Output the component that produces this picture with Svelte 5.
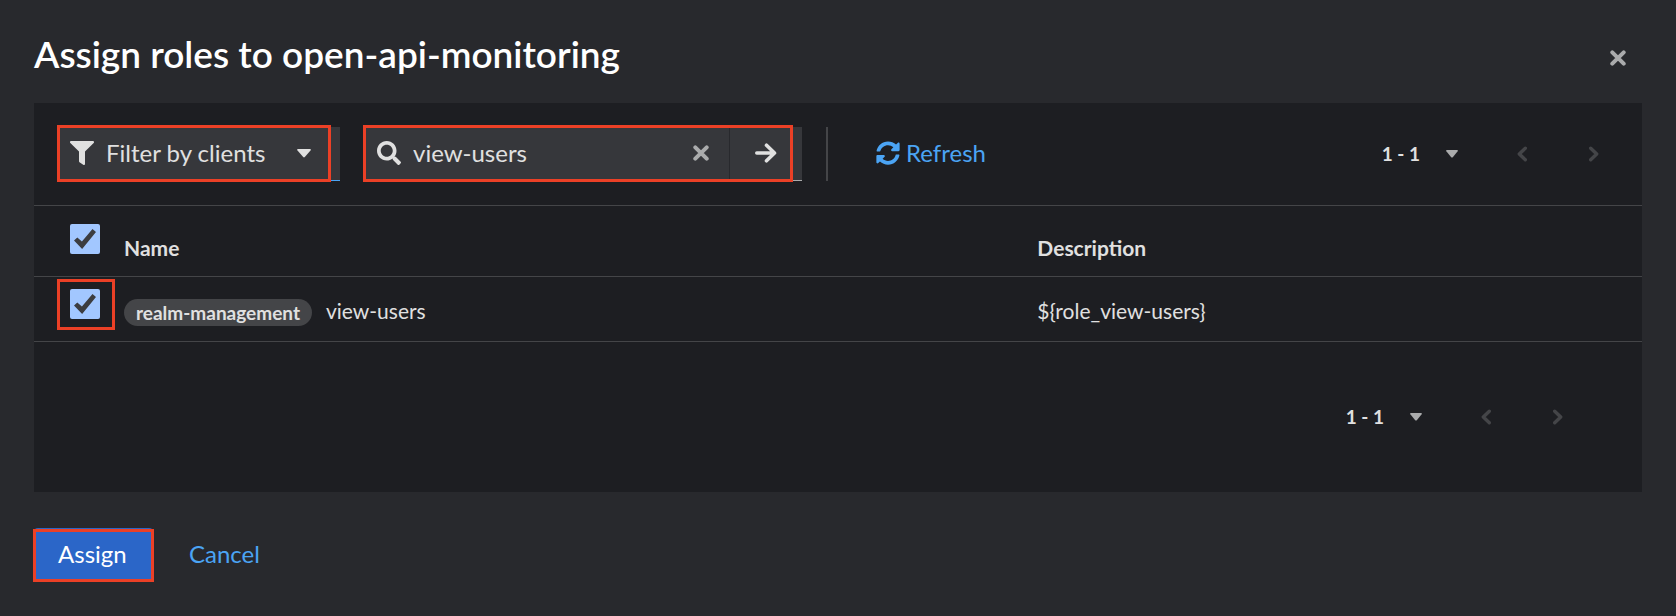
<script>
  let filter = $state('view-users');
  let roles = $state([
    { client: 'realm-management', name: 'view-users', description: '${role_view-users}', selected: true }
  ]);
  let allSelected = $derived(roles.every((r) => r.selected));

  function toggleAll(event) {
    const checked = event.currentTarget.checked;
    roles.forEach((r) => (r.selected = checked));
  }
</script>

{#snippet times()}
  <svg class="times" viewBox="0 0 16 16" aria-hidden="true"><path d="M2.3 2.3 13.7 13.7M13.7 2.3 2.3 13.7" /></svg>
{/snippet}

{#snippet pagination(position)}
  <div class="pagination {position}">
    <button class="range" type="button" aria-label="Items per page">
      <span>1 - 1</span>
      <svg width="12" height="8" viewBox="0 0 12 8" aria-hidden="true"><path d="M.8 0h10.4q1.2.2.3 1.4L6.8 7.2Q6 8 5.2 7.2L.5 1.4Q-.4.2.8 0Z" fill="currentColor" /></svg>
    </button>
    <button class="step" type="button" aria-label="Previous page" disabled>
      <svg width="10" height="16" viewBox="0 0 10 16" aria-hidden="true"><path d="M8.3 2.2 2.3 8l6 5.8" /></svg>
    </button>
    <button class="step" type="button" aria-label="Next page" disabled>
      <svg width="10" height="16" viewBox="0 0 10 16" aria-hidden="true"><path d="m1.7 2.2 6 5.8-6 5.8" /></svg>
    </button>
  </div>
{/snippet}

<div class="dialog" role="dialog" aria-labelledby="dialog-title">
  <header>
    <h1 id="dialog-title">Assign roles to open-api-monitoring</h1>
    <button class="close" type="button" aria-label="Close">{@render times()}</button>
  </header>

  <main>
    <div class="toolbar">
      <button class="filter marked" type="button">
        <svg width="24" height="24" viewBox="0 0 512 512" aria-hidden="true"><path fill="currentColor" d="M488 0H24C2.700 0-8.100 25.900 7.030 40.970L192 225.940V432c0 7.830 3.820 15.170 10.240 19.660l80 55.980C298.020 518.690 320 507.490 320 488V225.940L504.970 40.970C520.070 25.930 509.360 0 487.980 0Z" /></svg>
        <span>Filter by clients</span>
        <svg class="caret" width="14" height="9" viewBox="0 0 14 9" aria-hidden="true"><path fill="currentColor" d="M.9 0h12.200q1.300.2.4 1.400L7.800 8.100q-.8.900-1.600 0L.5 1.400Q-.4.2.9 0Z" /></svg>
      </button>

      <div class="search marked">
        <svg width="24" height="24" viewBox="0 0 512 512" aria-hidden="true"><path fill="currentColor" d="M505 442.700 405.300 343c-4.500-4.500-10.600-7-17-7H372c27.600-35.300 44-79.700 44-128C416 93.100 322.900 0 208 0S0 93.100 0 208s93.100 208 208 208c48.300 0 92.700-16.400 128-44v16.300c0 6.400 2.500 12.500 7 17l99.700 99.700c9.400 9.400 24.600 9.400 33.900 0l28.300-28.300c9.400-9.400 9.400-24.600.1-34zM208 336c-70.700 0-128-57.200-128-128 0-70.700 57.200-128 128-128 70.700 0 128 57.200 128 128 0 70.700-57.200 128-128 128z" /></svg>
        <input type="text" bind:value={filter} aria-label="Search for role" />
        <button class="clear" type="button" aria-label="Clear" onclick={() => (filter = '')}>{@render times()}</button>
        <button class="submit" type="button" aria-label="Search">
          <svg width="22" height="20" viewBox="0 0 22 20" aria-hidden="true"><path d="M1.800 10H19M11.500 2.200 19.500 10l-8 7.800" /></svg>
        </button>
      </div>

      <div class="divider"></div>

      <button class="refresh" type="button">
        <svg width="24" height="24" viewBox="0 0 512 512" aria-hidden="true"><path fill="currentColor" d="M370.720 133.280C339.460 104.010 298.890 87.960 255.850 88c-77.460.070-144.330 53.180-162.790 126.850-1.340 5.360-6.120 9.150-11.650 9.150H24.100c-7.500 0-13.190-6.810-11.810-14.180C33.930 94.920 134.810 8 256 8c66.450 0 126.790 26.140 171.320 68.690L463.030 40.970C478.150 25.850 504 36.560 504 57.940V192c0 13.260-10.740 24-24 24H345.940c-21.380 0-32.090-25.850-16.970-40.970l41.750-41.750zM32 296h134.060c21.380 0 32.090 25.850 16.970 40.970l-41.750 41.750c31.260 29.270 71.840 45.320 114.870 45.280 77.420-.070 144.310-53.140 162.780-126.850 1.340-5.360 6.120-9.150 11.650-9.150h57.300c7.500 0 13.190 6.810 11.810 14.180C478.070 417.080 377.190 504 256 504c-66.450 0-126.790-26.140-171.320-68.690L48.970 471.030C33.850 486.150 8 475.440 8 454.060V320c0-13.260 10.750-24 24-24z" /></svg>
        Refresh
      </button>

      {@render pagination('top')}
    </div>

    <table>
      <colgroup><col class="col-check" /><col class="col-name" /><col /></colgroup>
      <thead>
        <tr>
          <th class="check"><label><input type="checkbox" aria-label="Select all roles" checked={allSelected} onchange={toggleAll} /></label></th>
          <th scope="col">Name</th>
          <th scope="col">Description</th>
        </tr>
      </thead>
      <tbody>
        {#each roles as role}
          <tr>
            <td class="check"><label class="marked"><input type="checkbox" aria-label="Select {role.name}" bind:checked={role.selected} /></label></td>
            <td><div class="role"><span class="badge">{role.client}</span><span>{role.name}</span></div></td>
            <td>{role.description}</td>
          </tr>
        {/each}
      </tbody>
    </table>

    {@render pagination('bottom')}
  </main>

  <footer>
    <button class="assign marked" type="button">Assign</button>
    <button class="cancel" type="button">Cancel</button>
  </footer>
</div>

<style>
  :global(body) {
    margin: 0;
    background: #28292d;
  }

  * {
    box-sizing: border-box;
  }

  .dialog {
    padding: 30px 34px 34px;
    color: #e0e0e0;
    font-family: Lato, "Open Sans", sans-serif;
    font-size: 21px;
    line-height: 30px;
  }

  button,
  input {
    margin: 0;
    padding: 0;
    border: 0;
    background: none;
    color: inherit;
    font: inherit;
  }

  button {
    display: flex;
    align-items: center;
    white-space: nowrap;
  }

  svg {
    display: block;
    flex: none;
  }

  .marked {
    position: relative;
  }

  .marked::after {
    content: "";
    position: absolute;
    border: 3px solid #eb4026;
    pointer-events: none;
  }

  header {
    display: flex;
    align-items: flex-start;
    justify-content: space-between;
    height: 73px;
  }

  h1 {
    margin: 0;
    color: #fff;
    font-size: 37px;
    font-weight: 600;
    line-height: 48px;
  }

  .close {
    justify-content: center;
    width: 48px;
    height: 56px;
    color: #aaabac;
  }

  .times {
    width: 16px;
    height: 16px;
    fill: none;
    stroke: currentColor;
    stroke-width: 4;
    stroke-linecap: round;
  }

  main {
    background: #1d1e22;
  }

  .toolbar {
    display: flex;
    align-items: center;
    gap: 24px;
    padding: 24px 12px 24px 24px;
    border-bottom: 1px solid #444548;
    font-size: 24px;
  }

  .filter,
  .search {
    height: 54px;
    padding: 0 0 1px 12px;
    background: #36373b;
  }

  .filter {
    gap: 12px;
    width: 282px;
    padding-right: 29px;
    border-bottom: 1px solid #4ba4f4;
  }

  .filter::after {
    inset: -2px 9px -2px -1px;
  }

  .caret {
    margin-left: auto;
  }

  .search {
    display: flex;
    align-items: center;
    width: 438px;
    padding-left: 13px;
    border-bottom: 1px solid #aaabac;
  }

  .search::after {
    inset: -2px 9px -2px -1px;
  }

  .search input {
    flex: 1;
    min-width: 0;
    padding-left: 12px;
    outline: none;
  }

  .clear {
    justify-content: center;
    width: 56px;
    height: 100%;
    color: #aaabac;
  }

  .submit {
    justify-content: center;
    width: 73px;
    height: 100%;
    border-left: 1px solid #28292d;
  }

  .submit svg {
    fill: none;
    stroke: currentColor;
    stroke-width: 3.6;
    stroke-linecap: round;
    stroke-linejoin: round;
  }

  .divider {
    width: 2px;
    height: 54px;
    background: #444548;
  }

  .refresh {
    gap: 6px;
    height: 54px;
    padding: 0 24px 2px;
    color: #4ba4f4;
  }

  .pagination {
    display: flex;
    align-items: center;
    justify-content: flex-end;
    margin-left: auto;
    font-size: 19px;
    font-weight: 700;
  }

  .bottom {
    padding: 48px;
  }

  .range,
  .step {
    height: 54px;
    padding-bottom: 1px;
  }

  .range {
    gap: 26px;
    padding-right: 28px;
  }

  .range svg {
    color: #aaabac;
  }

  .step {
    justify-content: center;
    width: 72px;
    color: #444548;
  }

  .step svg {
    fill: none;
    stroke: currentColor;
    stroke-width: 3.4;
    stroke-linecap: round;
    stroke-linejoin: round;
  }

  table {
    width: 100%;
    table-layout: fixed;
    border-collapse: separate;
    border-spacing: 0;
  }

  .col-check {
    width: 90px;
  }

  .col-name {
    width: 56.8%;
  }

  th,
  td {
    padding: 0;
    border-bottom: 1px solid #444548;
    text-align: left;
    vertical-align: top;
  }

  th {
    height: 71px;
    padding-top: 27px;
    font-weight: 700;
  }

  td {
    height: 65px;
    padding-top: 19px;
  }

  th.check {
    padding: 18px 0 0 36px;
  }

  td.check {
    padding: 12px 0 0 36px;
  }

  label {
    display: block;
    width: 30px;
    height: 30px;
  }

  label.marked::after {
    inset: -10px -15px -11px -13px;
  }

  input[type="checkbox"] {
    display: grid;
    place-items: center;
    width: 30px;
    height: 30px;
    border-radius: 2px;
    background: #a2c7ff;
    appearance: none;
  }

  input[type="checkbox"]:checked::before {
    content: "";
    width: 22px;
    height: 20px;
    background: #3c3d40;
    clip-path: polygon(0 57%, 15% 42%, 36% 62%, 84% 0, 100% 15%, 37% 100%);
  }

  .role {
    display: flex;
    align-items: center;
    gap: 14px;
  }

  .badge {
    margin-top: 2px;
    padding: 0 12px;
    border-radius: 14px;
    background: #444548;
    font-size: 19px;
    font-weight: 700;
    line-height: 27px;
  }

  footer {
    display: flex;
    gap: 12px;
    padding-top: 36px;
    font-size: 24px;
  }

  .assign,
  .cancel {
    height: 54px;
    padding: 0 24px 2px;
  }

  .assign {
    min-width: 119px;
    border-radius: 4px;
    background: #2b66c8;
    color: #fff;
  }

  .assign::after {
    inset: 1px -1px 0 -1px;
  }

  .cancel {
    color: #4ba4f4;
  }
</style>
